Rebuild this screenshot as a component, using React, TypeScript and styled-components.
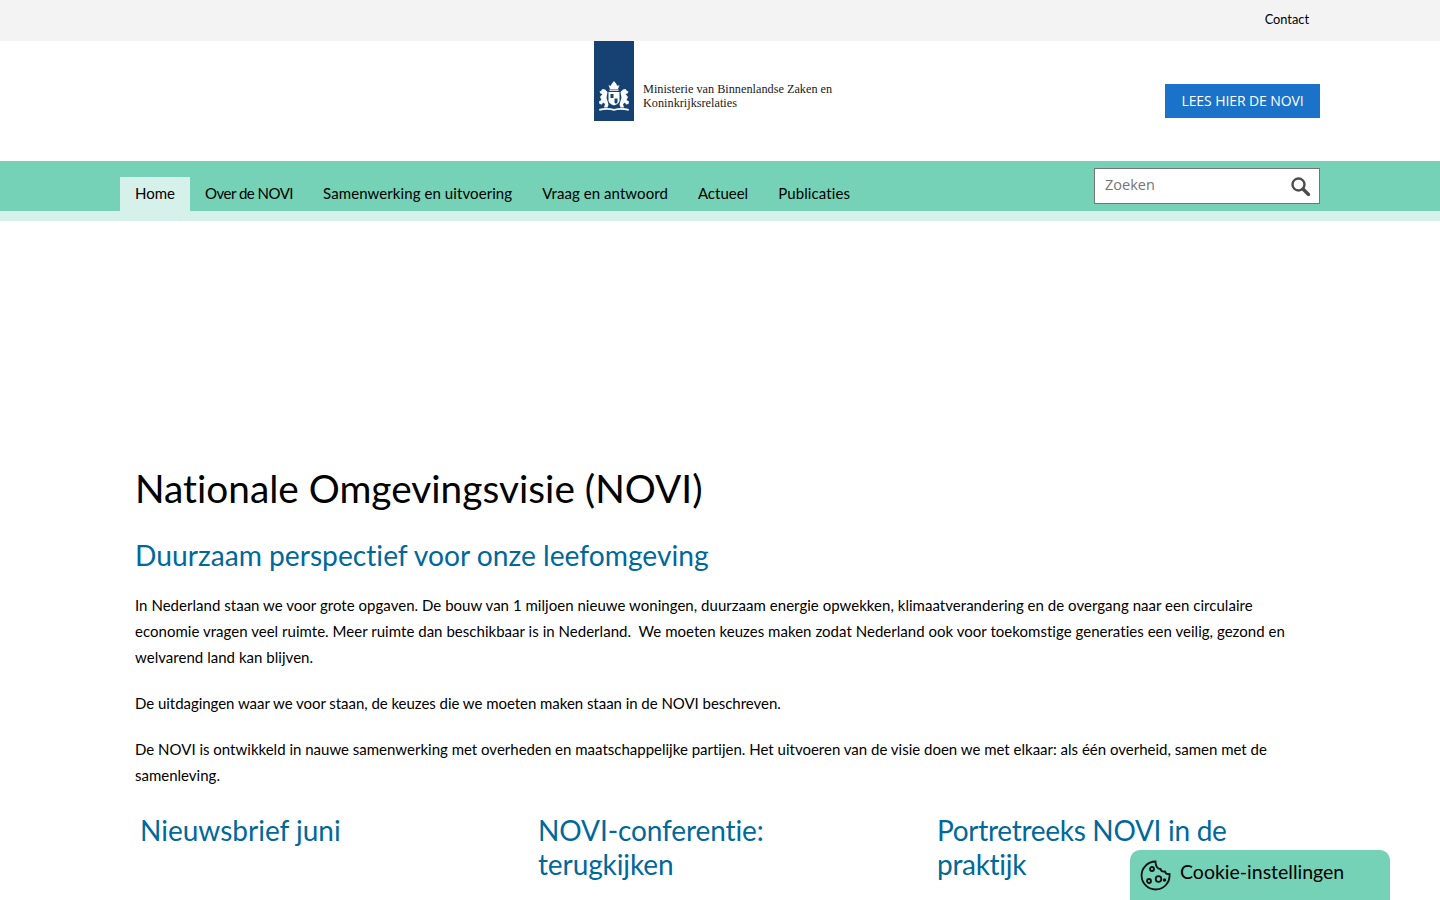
import React from "react";
import styled, { createGlobalStyle } from "styled-components";

const Global = createGlobalStyle`
  html, body { margin: 0; padding: 0; background: #fff; overflow: hidden; height: 900px; }
  body { font-family: "Lato", "Noto Sans", sans-serif; color: #000; font-variant-ligatures: none; }
`;
const Page = styled.div`width: 1440px; height: 900px; overflow: hidden; position: relative;`;
const TopBar = styled.div`height: 41px; background: #f3f3f3; display: flex; justify-content: flex-end; padding-right: 131px; box-sizing: border-box;`;
const TopLink = styled.a`font-size: 12.8px; line-height: 38px; color: #000;`;
const Header = styled.header`height: 120px; position: relative; display: flex; justify-content: flex-end; align-items: center; padding-right: 120px; box-sizing: border-box;`;
const Logo = styled.div`position: absolute; left: 594px; top: 0; display: flex; align-items: center; gap: 9px; height: 80px;`;
const LogoBar = styled.div`width: 40px; height: 80px; background: #154273; display: flex; align-items: flex-end; justify-content: center; padding-bottom: 8px; box-sizing: border-box;`;
const LogoText = styled.div`font-family: "Liberation Serif", serif; font-size: 12.25px; line-height: 14px; color: #1a1a1a; padding-top: 30px; white-space: nowrap;`;
const CTA = styled.a`width: 155px; height: 34px; background: #1b72c9; color: #fff; font-family: "Open Sans", sans-serif; font-size: 14px; line-height: 34px; text-align: center; letter-spacing: -0.1px; white-space: nowrap;`;
const NavBand = styled.div`height: 60px; background: linear-gradient(#76d2b6 0 50px, #d6f1e9 50px 60px); box-sizing: border-box; padding: 0 120px; display: flex; justify-content: space-between;`;
const NavList = styled.nav`display: flex; padding-top: 16px; height: 34px;`;
const NavItem = styled.a<{ $active?: boolean; $spacing?: number }>`padding: 0 15px; font-size: 15px; line-height: 33px; height: 34px; color: #000; white-space: nowrap; letter-spacing: ${p => p.$spacing ?? 0}px; background: ${p => (p.$active ? "#d6f1e9" : "transparent")};`;
const Search = styled.div`width: 226px; height: 36px; margin-top: 7px; background: #fff; border: 1px solid #757575; box-sizing: border-box; display: flex; align-items: center; justify-content: space-between; padding: 0 9px 0 10px;`;
const Placeholder = styled.span`font-family: "Open Sans", sans-serif; font-size: 14.500px; line-height: 30px; padding-bottom: 2px; color: #757575;`;
const Main = styled.main`padding: 238px 135px 0; box-sizing: border-box;`;
const Title = styled.h1`margin: 0; font-size: 38.800px; font-weight: 400; line-height: 58px; white-space: nowrap;`;
const Sub = styled.h2`margin: 19px 0 0; font-size: 28.200px; font-weight: 400; line-height: 38px; color: #01689b; white-space: nowrap;`;
const Para = styled.p<{ $spacing?: number }>`margin: 20px 0 0; font-size: 15px; line-height: 26px; width: 1160px; letter-spacing: ${p => p.$spacing ?? 0}px;`;
const First = styled(Para)`margin-top: 18px;`;
const Cols = styled.div`display: grid; grid-template-columns: 403px 399px 1fr; margin-top: 25px;`;
const ColTitle = styled.h3<{ $indent?: boolean; $spacing?: number }>`margin: 0; padding-left: ${p => (p.$indent ? "5px" : "0")}; font-size: 28px; font-weight: 400; line-height: 34px; color: #01689b; letter-spacing: ${p => p.$spacing ?? 0}px;`;
const Cookie = styled.div`position: absolute; left: 1130px; top: 850px; width: 260px; height: 50px; background: #76d2b6; border-radius: 10px 10px 0 0; display: flex; align-items: flex-start; gap: 9px; padding: 9px 0 0 9px; box-sizing: border-box; font-size: 19.500px; line-height: 26px; color: #000;`;

const Crest = () => (
  <svg width="36" height="33" viewBox="0 0 36 33" fill="#fff" aria-hidden="true">
    <path d="M14 9h8l1.500-4-2 1-1.500-2.500L18 1l-2 2.500L14.500 6l-2-1z" />
    <rect x="13.500" y="9.500" width="9" height="1.300" />
    <path d="M12.500 12h11v8.500c0 2.500-3 4-5.500 5-2.500-1-5.500-2.500-5.500-5z" />
    <path d="M14.500 14h3v4h-3zM18.500 18.500h3v4l-1.500 1.200-1.500-1z" fill="#154273" />
    <path d="M11.500 12 9 9.500l-2.500-.5L5 11l-1.500.5 1 2 2 .5L4 17l1.500 3-2.500 1.500.5 2.500 2.500.5 1-2 2 1.500L8 27.500h3.500l1-3-1-3.500-1-3z" />
    <path d="M24.500 12 27 9.500l2.500-.5 1.500 2 1.500.5-1 2-2 .5 2.500 3-1.500 3 2.500 1.500-.5 2.500-2.500.5-1-2-2 1.500 1 3.500h-3.500l-1-3 1-3.500 1-3z" />
    <path d="M3 29c5-1.500 10-1.500 15 0 5-1.500 10-1.500 15 0l-.5 1.800C27 29.500 22 29.500 18 30.800c-4-1.300-9-1.300-14.500 0z" />
  </svg>
);

const SearchIcon = () => (
  <svg width="19" height="19" viewBox="0 0 19 19" fill="none" stroke="#4d4d4d" aria-hidden="true">
    <circle cx="7.500" cy="7.500" r="6" strokeWidth="2.400" />
    <path d="M12 12l5.500 5.500" strokeWidth="3.400" strokeLinecap="round" />
  </svg>
);

const CookieIcon = () => (
  <svg width="32" height="32" viewBox="0 0 32 32" fill="none" stroke="#111" strokeWidth="1.800" aria-hidden="true">
    <path d="M16.500 2.500A14 14 0 1 0 30.500 15c-2.500.5-4-.5-4.500-2.500-2.500.5-4-.5-4.500-2.500-3 .2-5-3-5-7.500z" />
    <circle cx="13" cy="10" r="2" />
    <circle cx="10" cy="22" r="2" />
    <circle cx="19.500" cy="20" r="2.800" />
    <circle cx="25.500" cy="21" r="0.900" />
  </svg>
);

export default function App() {
  return (
    <Page>
      <Global />
      <TopBar><TopLink>Contact</TopLink></TopBar>
      <Header>
        <Logo>
          <LogoBar><Crest /></LogoBar>
          <LogoText>Ministerie van Binnenlandse Zaken en<br />Koninkrijksrelaties</LogoText>
        </Logo>
        <CTA>LEES HIER DE NOVI</CTA>
      </Header>
      <NavBand>
        <NavList>
          <NavItem $active>Home</NavItem>
          <NavItem $spacing={-0.5}>Over de NOVI</NavItem>
          <NavItem $spacing={0.08}>Samenwerking en uitvoering</NavItem>
          <NavItem $spacing={0.06}>Vraag en antwoord</NavItem>
          <NavItem>Actueel</NavItem>
          <NavItem $spacing={0.1}>Publicaties</NavItem>
        </NavList>
        <Search><Placeholder>Zoeken</Placeholder><SearchIcon /></Search>
      </NavBand>
      <Main>
        <Title>Nationale Omgevingsvisie (NOVI)</Title>
        <Sub>Duurzaam perspectief voor onze leefomgeving</Sub>
        <First $spacing={0.03}>In Nederland staan we voor grote opgaven. De bouw van 1 miljoen nieuwe woningen, duurzaam energie opwekken, klimaatverandering en de overgang naar een circulaire economie vragen veel ruimte. Meer ruimte dan beschikbaar is in Nederland.&nbsp; We moeten keuzes maken zodat Nederland ook voor toekomstige generaties een veilig, gezond en welvarend land kan blijven.</First>
        <Para $spacing={-0.04}>De uitdagingen waar we voor staan, de keuzes die we moeten maken staan in de NOVI beschreven.</Para>
        <Para>De NOVI is ontwikkeld in nauwe samenwerking met overheden en maatschappelijke partijen. Het uitvoeren van de visie doen we met elkaar: als één overheid, samen met de samenleving.</Para>
        <Cols>
          <ColTitle $indent>Nieuwsbrief juni</ColTitle>
          <ColTitle $spacing={-0.1}>NOVI-conferentie:<br />terugkijken</ColTitle>
          <ColTitle $spacing={-0.3}>Portretreeks NOVI in de praktijk</ColTitle>
        </Cols>
      </Main>
      <Cookie><CookieIcon />Cookie-instellingen</Cookie>
    </Page>
  );
}
